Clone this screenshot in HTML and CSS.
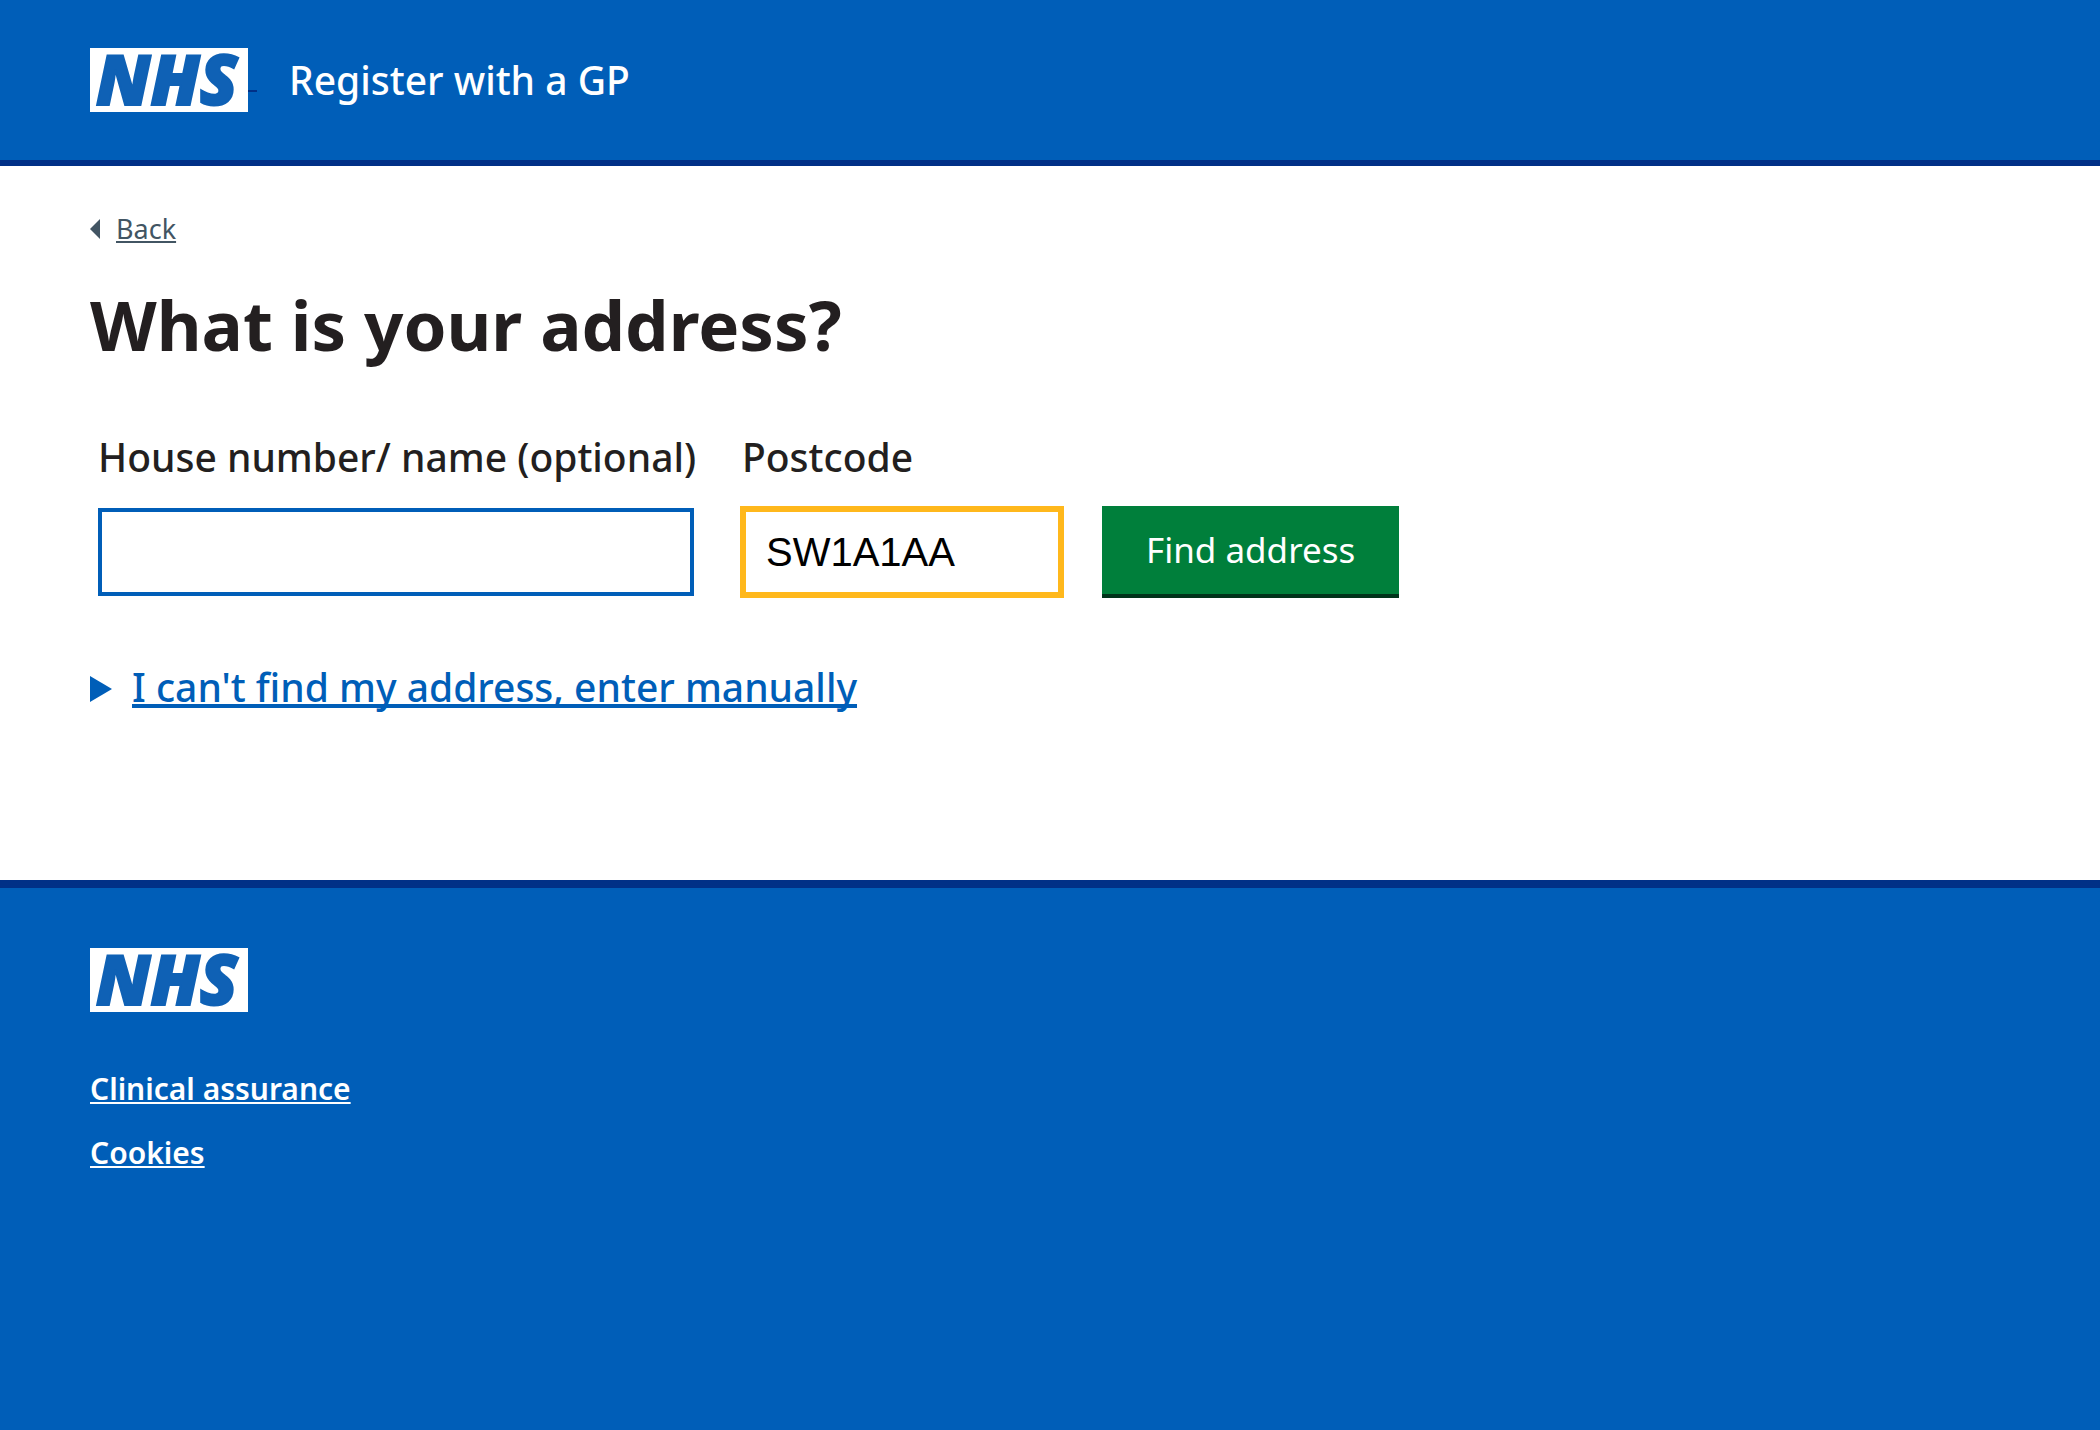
FILE: index.html
```html
<!DOCTYPE html>
<html lang="en">
<head>
  <meta charset="utf-8">
  <meta name="viewport" content="width=device-width, initial-scale=1">
  <title>What is your address? - Register with a GP</title>
  <link rel="stylesheet" href="styles.css">
</head>
<body>
  <header class="header">
    <a class="header-home" href="#">
      <svg class="logo" viewBox="0 0 158 64" role="img" aria-label="NHS">
        <rect width="158" height="64" fill="#fff"/>
        <text class="logo-text" x="6" y="57">NHS</text>
      </svg>
    </a>
    <a class="header-service" href="#">Register with a GP</a>
  </header>

  <main class="main">
    <a class="back-link" href="#">
      <svg class="back-arrow" viewBox="0 0 10 20" aria-hidden="true"><path d="M10 0v20L0 10z"/></svg>
      <span class="back-text">Back</span>
    </a>

    <h1 class="title">What is your address?</h1>

    <form class="address-form">
      <div class="field field-house">
        <label class="label" for="house">House number/ name (optional)</label>
        <input class="input" id="house" name="house" type="text">
      </div>
      <div class="field field-postcode">
        <label class="label" for="postcode">Postcode</label>
        <input class="input input-active" id="postcode" name="postcode" type="text" value="SW1A1AA">
      </div>
      <button class="button" type="button">Find address</button>
    </form>

    <details class="details">
      <summary class="summary">
        <svg class="summary-arrow" viewBox="0 0 22 26" aria-hidden="true"><path d="M0 0v26l22-13z"/></svg>
        <span class="summary-text">I can't find my address, enter manually</span>
      </summary>
    </details>
  </main>

  <footer class="footer">
    <svg class="logo" viewBox="0 0 158 64" role="img" aria-label="NHS">
      <rect width="158" height="64" fill="#fff"/>
      <text class="logo-text" x="6" y="57">NHS</text>
    </svg>
    <ul class="footer-list">
      <li><a class="footer-link" href="#">Clinical assurance</a></li>
      <li><a class="footer-link" href="#">Cookies</a></li>
    </ul>
  </footer>
</body>
</html>
```
FILE: styles.css
```css
:root {
  --blue: #005eb8;
  --dark-blue: #003087;
  --text: #231f20;
  --gutter: 90px;
}

* {
  box-sizing: border-box;
}

body {
  margin: 0;
  min-height: 100vh;
  display: flex;
  flex-direction: column;
  background: #fff;
  color: var(--text);
  font-family: "Noto Sans", "Open Sans", sans-serif;
  font-size: 39px;
  line-height: 48px;
  font-weight: 500;
}

.header {
  display: flex;
  align-items: center;
  gap: 32px;
  padding: 48px var(--gutter);
  background: var(--blue);
  border-bottom: 6px solid var(--dark-blue);
}

.header-home {
  display: flex;
  align-items: center;
}

/* Short rule that trails the logo link */
.header-home::after {
  content: "";
  width: 9px;
  height: 2px;
  margin-top: 22px;
  background: var(--dark-blue);
}

.logo {
  display: block;
  width: 158px;
  height: 64px;
  overflow: visible;
}

.logo-text {
  font-size: 69px;
  font-weight: 900;
  font-style: italic;
  fill: #0f61b5;
  stroke: #0f61b5;
  stroke-width: 2px;
}

.header-service {
  color: #fff;
  text-decoration: none;
}

.main {
  padding: 48px var(--gutter) 169px;
}

.back-link {
  display: flex;
  width: fit-content;
  align-items: baseline;
  gap: 16px;
  color: #425563;
  font-size: 27px;
  line-height: 30px;
  font-weight: 400;
  text-decoration: none;
}

.back-arrow {
  width: 10px;
  height: 20px;
  fill: currentColor;
}

.back-text {
  text-decoration: underline 2px;
  text-underline-offset: 2px;
  text-decoration-skip-ink: none;
}

.title {
  margin: 40px 0 69px;
  font-size: 69px;
  line-height: 80px;
  font-weight: 700;
}

.address-form {
  display: flex;
  flex-wrap: wrap;
  align-items: flex-end;
  padding-left: 8px;
}

.field {
  display: flex;
  flex-direction: column;
  gap: 27px;
}

.field-house {
  width: 596px;
  margin-right: 48px;
}

.field-postcode {
  width: 320px;
  margin-right: 40px;
}

.label {
  white-space: nowrap;
}

.input {
  width: 100%;
  height: 88px;
  padding: 0 20px;
  border: 4px solid var(--blue);
  border-radius: 0;
  background: #fff;
  color: #000;
  font-family: "Liberation Sans", Arial, sans-serif;
  font-size: 40px;
}

.input-active,
.input:focus {
  border-color: #ffb81c;
  outline: 2px solid #ffb81c;
}

.button {
  height: 88px;
  margin-bottom: 2px;
  padding: 0 44px 2px;
  border: 0;
  background: #007f3b;
  box-shadow: 0 4px 0 #00331a;
  color: #fff;
  font-family: inherit;
  font-size: 35px;
  font-weight: 400;
}

.details {
  margin-top: 67px;
}

.summary {
  display: flex;
  width: fit-content;
  align-items: baseline;
  gap: 20px;
  color: var(--blue);
  cursor: pointer;
  list-style: none;
}

.summary-arrow {
  width: 22px;
  height: 26px;
  fill: currentColor;
}

.summary-text {
  text-decoration: underline 4px;
  text-underline-offset: 2px;
  text-decoration-skip-ink: none;
}

.footer {
  flex: 1;
  padding: 60px var(--gutter);
  background: var(--blue);
  border-top: 8px solid var(--dark-blue);
}

.footer-list {
  display: flex;
  flex-direction: column;
  gap: 24px;
  margin: 57px 0 0;
  padding: 0;
  list-style: none;
  font-size: 30px;
  line-height: 40px;
  font-weight: 600;
}

.footer-link {
  color: #fff;
  text-decoration: underline 2px;
  text-underline-offset: 2px;
  text-decoration-skip-ink: none;
}
```
